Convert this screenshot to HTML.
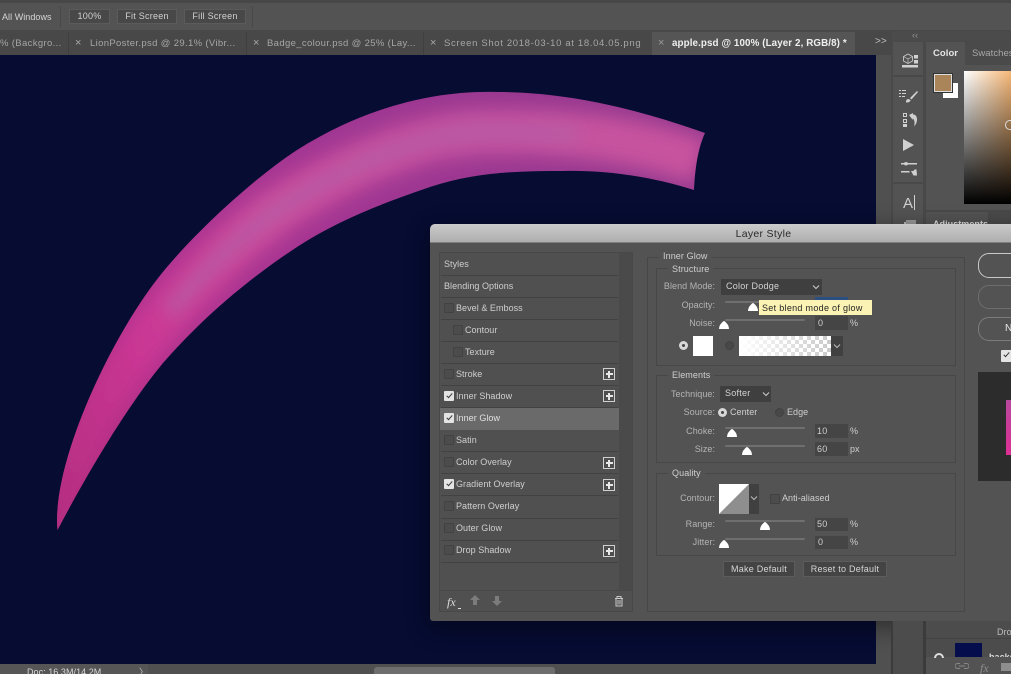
<!DOCTYPE html>
<html><head><meta charset="utf-8"><style>
html,body{margin:0;padding:0;width:1011px;height:674px;overflow:hidden;background:#535353}
body{font-family:"Liberation Sans",sans-serif;position:relative}
#r{position:absolute;left:0;top:0;width:1011px;height:674px;overflow:hidden;filter:blur(.35px)}
.a,.t,.tr{position:absolute}
.t{white-space:nowrap;line-height:12px;font-size:9px;letter-spacing:.05px;color:#cfcfcf}
.tr{white-space:nowrap;line-height:12px;font-size:9px;letter-spacing:.05px;color:#b4b4b4;text-align:right;right:296px}
.row{position:absolute;left:441px;width:177px;height:21px;border-bottom:1px solid #424242}
.cb{position:absolute;width:8px;height:8px;background:#4c4c4c;border:1px solid #424242;border-radius:1px}
.cb.on{background:#e4e4e4;border-color:#e4e4e4}
.cb.on:after{content:"";position:absolute;left:2.5px;top:0;width:2px;height:5px;border:solid #333;border-width:0 1.6px 1.6px 0;transform:rotate(42deg)}
.plus{position:absolute;left:603px;width:10px;height:10px;border:1px solid #d0d0d0;background:#4e4e4e}
.plus:before{content:"";position:absolute;left:1.5px;top:4.25px;width:7px;height:1.5px;background:#e8e8e8}
.plus:after{content:"";position:absolute;left:4.25px;top:1.5px;width:1.5px;height:7px;background:#e8e8e8}
.box{position:absolute;border:1px solid #474747;box-sizing:border-box}
.lab{position:absolute;background:#535353;padding:0 4px;line-height:12px;font-size:9px;letter-spacing:.1px;color:#cfcfcf;white-space:nowrap}
.trk{position:absolute;left:725px;width:80px;height:2px;background:#6f6f6f;border-radius:1px}
.th{position:absolute;width:0;height:0}
.th svg{position:absolute;left:-5px;top:-5px}
.inp{position:absolute;left:815px;width:33px;height:14px;background:#454545;box-sizing:border-box;padding-left:2px;line-height:14px;font-size:9px;color:#cfcfcf;letter-spacing:.25px}
.dd{position:absolute;background:#3f3f3f;height:16px;line-height:15px;font-size:9px;color:#d4d4d4;letter-spacing:.25px;box-sizing:border-box;padding-left:5px}
.btn{position:absolute;background:#444;border:1px solid #5c5c5c;box-sizing:border-box;text-align:center;font-size:9px;color:#d6d6d6;letter-spacing:.25px;white-space:nowrap}
.tb{position:absolute;top:9px;height:15px;background:#484848;border:1px solid #5b5b5b;box-sizing:border-box;text-align:center;line-height:13px;font-size:9px;color:#d0d0d0;letter-spacing:.25px;white-space:nowrap}
.tab{position:absolute;top:38px;line-height:12px;font-size:9.5px;letter-spacing:.35px;color:#a6a6a6;white-space:nowrap}
.x{position:absolute;top:37px;font-size:11px;line-height:12px;color:#a8a8a8}
.sep{position:absolute;top:32px;width:1px;height:23px;background:#3f3f3f}
.pb{position:absolute;left:978px;width:50px;height:24px;border:1px solid #707070;border-radius:11px;box-sizing:border-box}
</style></head><body><div id="r">

<!-- top bars -->
<div class="a" style="left:0;top:0;width:1011px;height:3px;background:#474747"></div>
<div class="a" style="left:0;top:3px;width:1011px;height:28px;background:#535353"></div>
<div class="a" style="left:0;top:30px;width:1011px;height:1px;background:#484848"></div>
<div class="t" style="left:2px;top:10.5px;color:#d6d6d6">All Windows</div>
<div class="a" style="left:60px;top:6px;width:1px;height:21px;background:#484848"></div>
<div class="a" style="left:252px;top:6px;width:1px;height:21px;background:#484848"></div>
<div class="tb" style="left:69px;width:41px">100%</div>
<div class="tb" style="left:117px;width:60px">Fit Screen</div>
<div class="tb" style="left:184px;width:62px">Fill Screen</div>

<!-- tabs -->
<div class="a" style="left:0;top:31px;width:891px;height:24px;background:#484848"></div>
<div class="tab" style="left:0;">% (Backgro...</div>
<div class="sep" style="left:68px"></div>
<div class="x" style="left:75px">×</div>
<div class="tab" style="left:90px">LionPoster.psd @ 29.1% (Vibr...</div>
<div class="sep" style="left:246px"></div>
<div class="x" style="left:253px">×</div>
<div class="tab" style="left:267px">Badge_colour.psd @ 25% (Lay...</div>
<div class="sep" style="left:423px"></div>
<div class="x" style="left:430px">×</div>
<div class="tab" style="left:444px;letter-spacing:.66px">Screen Shot 2018-03-10 at 18.04.05.png</div>
<div class="a" style="left:652px;top:32px;width:203px;height:23px;background:#555"></div>
<div class="x" style="left:658px;color:#9a9a9a">×</div>
<div class="tab" style="left:672px;color:#efefef;font-weight:bold;letter-spacing:.1px;font-size:9.8px">apple.psd @ 100% (Layer 2, RGB/8) *</div>
<div class="t" style="left:875px;top:36px;font-size:10px;color:#bbb">&gt;&gt;</div>

<!-- canvas -->
<div class="a" style="left:0;top:55px;width:876px;height:609px;background:#060c32"></div>
<svg class="a" style="left:0;top:55px" width="876" height="609" viewBox="0 55 876 609">
<defs>
<clipPath id="c"><path d="M57.500 530C52 470 100 360 147 293C180 245 251 180 297 150C360 110 430 90 497 92C570 92 640 110 705 133C698 148 695 168 694 190C650 176 605 170 563 171C518 171 475 172 430 187C385 202.500 340 219 297 247C250 278 205 315 163 363C128 405 88 472 57.500 530Z"/></clipPath>
<linearGradient id="g1" gradientUnits="userSpaceOnUse" x1="60" y1="530" x2="700" y2="130">
<stop offset="0" stop-color="#b42d80"/><stop offset=".22" stop-color="#ca3794"/><stop offset=".45" stop-color="#c94d9c"/><stop offset=".75" stop-color="#c2519f"/><stop offset="1" stop-color="#c9539e"/>
</linearGradient>
<linearGradient id="g2" gradientUnits="userSpaceOnUse" x1="60" y1="530" x2="700" y2="130">
<stop offset="0" stop-color="#a82a7a"/><stop offset=".3" stop-color="#ae3390"/><stop offset=".6" stop-color="#9f3792"/><stop offset="1" stop-color="#94398e"/>
</linearGradient>
<filter id="b" x="-20%" y="-20%" width="140%" height="140%"><feGaussianBlur stdDeviation="9"/></filter>
<filter id="b2" x="-20%" y="-20%" width="140%" height="140%"><feGaussianBlur stdDeviation="8"/></filter>
</defs>
<g clip-path="url(#c)">
<rect x="0" y="55" width="800" height="609" fill="url(#g2)"/>
<path d="M48 550C60 470 110 385 155 328C195 280 250 225 297 198C360 160 430 130 497 132C565 131 640 140 700 162" fill="none" stroke="url(#g1)" stroke-width="46" filter="url(#b)"/>
<path d="M170 312C200 275 250 225 297 198C360 160 430 130 497 132C525 132 550 133 575 135" fill="none" stroke="#b45fa8" stroke-opacity=".8" stroke-width="14" filter="url(#b2)"/>
</g>
</svg>

<!-- status + scroll -->
<div class="a" style="left:0;top:664px;width:891px;height:10px;background:#565656"></div>
<div class="t" style="left:27px;top:666px;color:#d8d8d8">Doc: 16.3M/14.2M</div>
<div class="t" style="left:139px;top:666px;color:#c8c8c8">〉</div>
<div class="a" style="left:148px;top:664px;width:728px;height:10px;background:#505050"></div>
<div class="a" style="left:374px;top:667px;width:181px;height:7px;background:#6e6e6e;border-radius:3px 3px 0 0"></div>
<div class="a" style="left:876px;top:55px;width:15px;height:619px;background:#505050"></div>

<!-- right side panels -->
<div class="a" style="left:891px;top:31px;width:120px;height:643px;background:#494949"></div>
<div class="a" style="left:892px;top:31px;width:119px;height:10px;background:#4b4b4b"></div>
<div class="t" style="left:912px;top:29px;font-size:9px;color:#999">‹‹</div>
<div class="a" style="left:893px;top:42px;width:30px;height:33px;background:#535353"></div>
<div class="a" style="left:893px;top:77px;width:30px;height:105px;background:#535353"></div>
<div class="a" style="left:893px;top:184px;width:30px;height:40px;background:#535353"></div>
<div class="a" style="left:926px;top:42px;width:85px;height:168px;background:#535353"></div>
<div class="a" style="left:926px;top:42px;width:85px;height:23px;background:#4a4a4a"></div>
<div class="a" style="left:926px;top:42px;width:39px;height:23px;background:#535353"></div>
<div class="t" style="left:933px;top:48px;color:#e4e4e4;font-weight:bold;font-size:9.5px">Color</div>
<div class="t" style="left:972px;top:48px;color:#a8a8a8;font-size:9.5px">Swatches</div>
<div class="a" style="left:943px;top:83px;width:15px;height:15px;background:#fff"></div>
<div class="a" style="left:934px;top:74px;width:16px;height:16px;background:#a98559;border:1px solid #ddd;box-shadow:0 0 0 1px #333"></div>
<div class="a" style="left:964px;top:71px;width:47px;height:133px;background:linear-gradient(to bottom,rgba(0,0,0,0),#000),linear-gradient(to right,#fff,#f6b877 100%)"></div>
<div class="a" style="left:1005px;top:120px;width:10px;height:10px;border:1px solid #ddd;border-radius:50%;box-sizing:border-box"></div>
<div class="a" style="left:926px;top:212px;width:62px;height:12px;background:#535353"></div>
<div class="a" style="left:990px;top:212px;width:21px;height:12px;background:#4a4a4a"></div>
<div class="t" style="left:933px;top:218px;color:#ddd;font-weight:bold">Adjustments</div>

<svg class="a" style="left:893px;top:42px" width="30" height="182" viewBox="893 42 30 182" fill="#d0d0d0">
<!-- libraries -->
<path d="M908 54l4.500 2.500v4.500l-4.500 2.500-4.500-2.500v-4.500z" fill="none" stroke="#c8c8c8" stroke-width=".9"/><path d="M903.500 56.500l4.500 2.500 4.500-2.500M908 59v4.500" fill="none" stroke="#c8c8c8" stroke-width=".7"/>
<rect x="914" y="55" width="4" height="3.500"/><rect x="914" y="60" width="4" height="3.500"/><rect x="902" y="65" width="16" height="2.500"/>
<!-- brush -->
<path d="M917 91l-7 7 1.500 1.500 6.500-7.500zM908.500 99c-2 0-2.500 1.500-2.500 3.500 2.500 0 4.500-.5 4.500-2.500z"/>
<path d="M899 90h2v1h-2zM902 90h4v1h-4zM899 93h2v1h-2zM902 93h4v1h-4zM899 96h2v1h-2zM902 96h3v1h-3z"/>
<!-- history -->
<path d="M903 113h4v4h-4zM904 114v2h2v-2zM903 119h4v4h-4zM904 120v2h2v-2zM903 124h4v3h-4z" fill-rule="evenodd"/>
<path d="M909 115l4-2v1.500c3 0 4 2.500 4 5 0 2.500-1 5-3 7 .8-2.500.8-5-.2-7-.4-.8-.8-1-1-1v1.500z"/>
<!-- play -->
<path d="M903 139v12l11-6z"/>
<!-- sliders -->
<path d="M901 163h3a2.500 2.500 0 0 1 4 0h9v1.500h-9a2.500 2.500 0 0 1-4 0h-3zM901 171h8.500v1.500h-8.500zM911 171h2.500a2.500 2.500 0 0 1 3-1.500l.5 6h-3.500z"/>
<!-- A -->
<text x="903" y="208" font-family="Liberation Sans" font-size="15" fill="#cfcfcf">A</text><rect x="914" y="195" width="1" height="15"/>
<path d="M904 222h10v3h-10z" fill="#bbb"/><path d="M906 220h10v4h-10z" fill="#999"/>
</svg>

<!-- dialog -->
<div class="a" style="left:430px;top:224px;width:600px;height:397px;background:#535353;border-radius:5px 0 0 3px;box-shadow:0 6px 24px rgba(0,0,0,.45);overflow:hidden">
 <div class="a" style="left:0;top:0;width:600px;height:19px;background:linear-gradient(#cbcbcb,#aeaeae);border-bottom:1px solid #7f7f7f;box-sizing:border-box"></div>
 <div class="a" style="left:0;top:3px;width:667px;text-align:center;font-size:10.5px;letter-spacing:.3px;line-height:15px;color:#2a2a2a">Layer Style</div>
</div>

<!-- left list -->
<div class="box" style="left:439px;top:252px;width:194px;height:360px;background:#505050;border-color:#484848"></div>
<div class="a" style="left:619px;top:253px;width:13px;height:337px;background:#4a4a4a"></div>
<div class="a" style="left:440px;top:590px;width:192px;height:1px;background:#484848"></div>

<div class="row" style="top:254px"></div><div class="t" style="left:444px;top:257.500px">Styles</div>
<div class="row" style="top:276px"></div><div class="t" style="left:444px;top:279.500px">Blending Options</div>
<div class="row" style="top:298px"></div><div class="cb" style="left:444px;top:303px"></div><div class="t" style="left:456px;top:301.500px">Bevel &amp; Emboss</div>
<div class="row" style="top:320px"></div><div class="cb" style="left:453px;top:325px"></div><div class="t" style="left:465px;top:323.500px">Contour</div>
<div class="row" style="top:342px"></div><div class="cb" style="left:453px;top:347px"></div><div class="t" style="left:465px;top:345.500px">Texture</div>
<div class="row" style="top:364px"></div><div class="cb" style="left:444px;top:369px"></div><div class="t" style="left:456px;top:367.500px">Stroke</div><div class="plus" style="top:368px"></div>
<div class="row" style="top:386px"></div><div class="cb on" style="left:444px;top:391px"></div><div class="t" style="left:456px;top:389.500px">Inner Shadow</div><div class="plus" style="top:390px"></div>
<div class="a" style="left:440px;top:408px;width:179px;height:22px;background:#6a6a6a"></div><div class="cb on" style="left:444px;top:413px"></div><div class="t" style="left:456px;top:411.500px;color:#e0e0e0">Inner Glow</div>
<div class="row" style="top:430px"></div><div class="cb" style="left:444px;top:435px"></div><div class="t" style="left:456px;top:433.500px">Satin</div>
<div class="row" style="top:452px"></div><div class="cb" style="left:444px;top:457px"></div><div class="t" style="left:456px;top:455.500px">Color Overlay</div><div class="plus" style="top:457px"></div>
<div class="row" style="top:474px"></div><div class="cb on" style="left:444px;top:479px"></div><div class="t" style="left:456px;top:477.500px">Gradient Overlay</div><div class="plus" style="top:479px"></div>
<div class="row" style="top:497px"></div><div class="cb" style="left:444px;top:501px"></div><div class="t" style="left:456px;top:500px">Pattern Overlay</div>
<div class="row" style="top:519px"></div><div class="cb" style="left:444px;top:523px"></div><div class="t" style="left:456px;top:522px">Outer Glow</div>
<div class="row" style="top:541px"></div><div class="cb" style="left:444px;top:545px"></div><div class="t" style="left:456px;top:544px">Drop Shadow</div><div class="plus" style="top:545px"></div>

<div class="t" style="left:447px;top:595px;font:italic 12px 'Liberation Serif',serif;color:#ddd">fx</div>
<div class="a" style="left:458px;top:608px;width:3px;height:1px;background:#ddd"></div>
<svg class="a" style="left:468px;top:594px" width="36" height="14" fill="#7c7c7c"><path d="M7 1l5 5h-3v5H5V6H2z"/><path d="M29 12l5-5h-3V2h-4v5h-3z"/></svg>
<svg class="a" style="left:613px;top:595px" width="12" height="12" fill="none" stroke="#c8c8c8"><path d="M2 3.500h8M4 3V1.500h4V3M3 3.500V11h6V3.500M5 5v4.500M7 5v4.500"/></svg>

<!-- right group -->
<div class="box" style="left:647px;top:257px;width:318px;height:355px"></div>
<div class="lab" style="left:659px;top:250px">Inner Glow</div>
<div class="box" style="left:656px;top:268px;width:300px;height:98px"></div>
<div class="lab" style="left:668px;top:263px">Structure</div>

<div class="tr" style="top:280px">Blend Mode:</div>
<div class="dd" style="left:721px;top:279px;width:101px">Color Dodge</div>
<svg class="a" style="left:812px;top:284px" width="8" height="6" fill="none" stroke="#ccc"><path d="M1 1.500l3 3 3-3"/></svg>
<div class="tr" style="top:299px">Opacity:</div>
<div class="trk" style="top:301px"></div>
<div class="a" style="left:815px;top:297px;width:33px;height:3px;background:#2a4f80"></div>
<div class="th" style="left:753px;top:307px"><svg width="10" height="10" fill="#fff"><path d="M5 1Q6 1 9 5Q10 7 10 9H0Q0 7 1 5Q4 1 5 1z"/></svg></div>
<div class="a" style="left:759px;top:300px;width:113px;height:15px;background:#fbf3b4"></div>
<div class="t" style="left:762px;top:302px;color:#242424;letter-spacing:.3px">Set blend mode of glow</div>
<div class="tr" style="top:317px">Noise:</div>
<div class="trk" style="top:319px"></div>
<div class="th" style="left:724px;top:325px"><svg width="10" height="10" fill="#fff"><path d="M5 1Q6 1 9 5Q10 7 10 9H0Q0 7 1 5Q4 1 5 1z"/></svg></div>
<div class="inp" style="top:316px;padding-left:3px">0</div><div class="t" style="left:850px;top:317px">%</div>

<div class="a" style="left:679px;top:341px;width:9px;height:9px;background:#d8d8d8;border-radius:50%"></div>
<div class="a" style="left:682px;top:344px;width:3px;height:3px;background:#444;border-radius:50%"></div>
<div class="a" style="left:693px;top:336px;width:20px;height:20px;background:#fff"></div>
<div class="a" style="left:725px;top:341px;width:9px;height:9px;background:#484848;border-radius:50%;border:1px solid #424242;box-sizing:border-box"></div>
<div class="a" style="left:739px;top:336px;width:92px;height:20px;background:linear-gradient(to right,#fff 0%,rgba(255,255,255,.1) 100%),repeating-conic-gradient(#c4c4c4 0 25%,#fff 0 50%) 0 0/8px 8px"></div>
<div class="a" style="left:831px;top:336px;width:12px;height:20px;background:#404040"></div>
<svg class="a" style="left:833px;top:343px" width="8" height="6" fill="none" stroke="#bbb"><path d="M1 1.500l3 3 3-3"/></svg>

<div class="box" style="left:656px;top:375px;width:300px;height:88px"></div>
<div class="lab" style="left:668px;top:369px">Elements</div>
<div class="tr" style="top:388px">Technique:</div>
<div class="dd" style="left:720px;top:386px;width:51px">Softer</div>
<svg class="a" style="left:762px;top:391px" width="8" height="6" fill="none" stroke="#ccc"><path d="M1 1.500l3 3 3-3"/></svg>
<div class="tr" style="top:406px">Source:</div>
<div class="a" style="left:718px;top:407.500px;width:9px;height:9px;background:#d8d8d8;border-radius:50%"></div>
<div class="a" style="left:721px;top:410.500px;width:3px;height:3px;background:#444;border-radius:50%"></div>
<div class="t" style="left:730px;top:406px">Center</div>
<div class="a" style="left:775px;top:407.500px;width:9px;height:9px;background:#484848;border-radius:50%;border:1px solid #424242;box-sizing:border-box"></div>
<div class="t" style="left:787px;top:406px">Edge</div>
<div class="tr" style="top:425px">Choke:</div>
<div class="trk" style="top:427px"></div>
<div class="th" style="left:732px;top:433px"><svg width="10" height="10" fill="#fff"><path d="M5 1Q6 1 9 5Q10 7 10 9H0Q0 7 1 5Q4 1 5 1z"/></svg></div>
<div class="inp" style="top:424px">10</div><div class="t" style="left:850px;top:425px">%</div>
<div class="tr" style="top:443px">Size:</div>
<div class="trk" style="top:445px"></div>
<div class="th" style="left:747px;top:451px"><svg width="10" height="10" fill="#fff"><path d="M5 1Q6 1 9 5Q10 7 10 9H0Q0 7 1 5Q4 1 5 1z"/></svg></div>
<div class="inp" style="top:442px">60</div><div class="t" style="left:850px;top:443px">px</div>

<div class="box" style="left:656px;top:473px;width:300px;height:83px"></div>
<div class="lab" style="left:668px;top:467px">Quality</div>
<div class="tr" style="top:492px">Contour:</div>
<svg class="a" style="left:719px;top:484px" width="30" height="30"><rect width="30" height="30" fill="#8e8e8e"/><path d="M0 0h30L0 30z" fill="#fff"/></svg>
<div class="a" style="left:749px;top:484px;width:10px;height:30px;background:#404040"></div>
<svg class="a" style="left:750px;top:495px" width="8" height="6" fill="none" stroke="#bbb"><path d="M1 1.500l3 3 3-3"/></svg>
<div class="cb" style="left:770px;top:494px"></div>
<div class="t" style="left:782px;top:492px">Anti-aliased</div>
<div class="tr" style="top:518px">Range:</div>
<div class="trk" style="top:520px"></div>
<div class="th" style="left:765px;top:526px"><svg width="10" height="10" fill="#fff"><path d="M5 1Q6 1 9 5Q10 7 10 9H0Q0 7 1 5Q4 1 5 1z"/></svg></div>
<div class="inp" style="top:518px;height:13px;line-height:13px">50</div><div class="t" style="left:850px;top:518px">%</div>
<div class="tr" style="top:536px">Jitter:</div>
<div class="trk" style="top:538px"></div>
<div class="th" style="left:724px;top:544px"><svg width="10" height="10" fill="#fff"><path d="M5 1Q6 1 9 5Q10 7 10 9H0Q0 7 1 5Q4 1 5 1z"/></svg></div>
<div class="inp" style="top:536px;height:13px;line-height:13px;padding-left:3px">0</div><div class="t" style="left:850px;top:536px">%</div>

<div class="btn" style="left:723px;top:561px;width:72px;height:16px;line-height:14px">Make Default</div>
<div class="btn" style="left:803px;top:561px;width:84px;height:16px;line-height:14px">Reset to Default</div>

<!-- right dialog buttons -->
<div class="pb" style="top:253px;border-color:#c8c8c8;height:25px"></div>
<div class="pb" style="top:285px;border-color:#6e6e6e"></div>
<div class="pb" style="top:317px;border-color:#7c7c7c"></div>
<div class="t" style="left:1005px;top:323px;color:#e8e8e8;font-size:10px">N</div>
<div class="cb on" style="left:1001px;top:350px;width:10px;height:10px"></div>
<div class="a" style="left:978px;top:372px;width:33px;height:109px;background:#2c2c2c"></div>
<div class="a" style="left:1006px;top:400px;width:5px;height:55px;background:linear-gradient(#b8489c,#dd2f95)"></div>

<!-- bottom right -->
<div class="a" style="left:891px;top:621px;width:120px;height:53px;background:#4c4c4c"></div>
<div class="a" style="left:891px;top:621px;width:2px;height:53px;background:#3b3b3b"></div>
<div class="a" style="left:923px;top:621px;width:3px;height:53px;background:#3b3b3b"></div>
<div class="a" style="left:926px;top:638px;width:85px;height:1px;background:#424242"></div>
<div class="t" style="left:997px;top:626px;color:#bdbdbd">Dro</div>
<div class="a" style="left:955px;top:643px;width:27px;height:15px;background:#060d4d"></div>
<div class="a" style="left:926px;top:657px;width:85px;height:17px;background:#535353"></div>
<div class="a" style="left:934px;top:653px;width:10px;height:5px;border:2px solid #ddd;border-bottom:0;border-radius:7px 7px 0 0;box-sizing:border-box"></div>
<div class="t" style="left:989px;top:651px;color:#ddd;font-weight:bold;height:6px;overflow:hidden;line-height:12px">backg</div>
<svg class="a" style="left:955px;top:662px" width="14" height="9" fill="none" stroke="#888"><path d="M5 1.500H2.500a2.500 2.500 0 0 0 0 5H5M9 1.500h2.500a2.500 2.500 0 0 1 0 5H9M4 4h6"/></svg>
<div class="t" style="left:980px;top:661px;font:italic 12px 'Liberation Serif',serif;color:#8e8e8e">fx</div>
<div class="a" style="left:1001px;top:663px;width:10px;height:8px;background:#8e8e8e"></div>

</div></body></html>
